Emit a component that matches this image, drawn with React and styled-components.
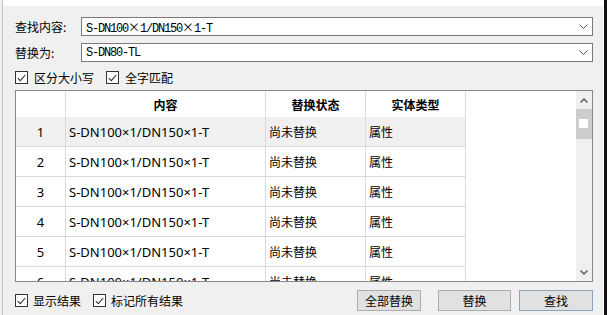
import React from "react";
import styled, { createGlobalStyle } from "styled-components";

const GlobalStyle = createGlobalStyle`
  html, body {
    margin: 0;
    padding: 0;
    background: #f0f0f0;
  }
  body {
    font-family: "Noto Sans CJK SC", "Noto Sans", sans-serif;
    color: #000;
  }
`;

const Window = styled.div`
  width: 607px;
  height: 315px;
  box-sizing: border-box;
  display: flex;
  background: #f0f0f0;
  border-right: 3px solid #111;
  overflow: hidden;
`;

const Pane = styled.div`
  flex: 1;
  margin-left: 2px;
  border-left: 1px solid #c4c4c4;
  border-right: 1px solid #fff;
  display: flex;
  flex-direction: column;
`;

const TopStrip = styled.div`
  height: 6px;
  background: #fff;
`;

const Body = styled.div`
  flex: 1;
  padding: 11px 10px 0 12px;
  display: flex;
  flex-direction: column;
`;

const FieldRow = styled.div`
  display: flex;
  align-items: center;
  height: 19px;
  & + & {
    margin-top: 7px;
  }
`;

const Label = styled.div`
  width: 66px;
  font-size: 12px;
  line-height: 19px;
  white-space: nowrap;
`;

const Combo = styled.div`
  flex: 1;
  height: 19px;
  box-sizing: border-box;
  border: 1px solid #7a7a7a;
  background: #fff;
  display: flex;
  align-items: center;
  padding: 0 4px 0 4px;
`;

const ComboText = styled.span`
  font-family: "Liberation Mono", monospace;
  font-size: 12px;
  letter-spacing: -1.2px;
  white-space: nowrap;
`;

const Wide = styled.span`
  display: inline-block;
  width: 12px;
  text-align: center;
  letter-spacing: 0;
  font-family: "Noto Sans CJK SC", sans-serif;
  font-size: 12px;
`;

const Chevron = styled.svg`
  margin-left: auto;
  display: block;
`;

const OptionsRow = styled.div`
  display: flex;
  align-items: center;
  gap: 12px;
  height: 13px;
  margin-top: ${({ top }) => top || 0}px;
`;

const CheckItem = styled.label`
  display: flex;
  align-items: center;
  gap: ${({ gap }) => gap || 6}px;
  font-size: 12px;
  white-space: nowrap;
`;

const Box = styled.span`
  width: 13px;
  height: 13px;
  box-sizing: border-box;
  border: 1px solid #333;
  background: #fff;
  display: flex;
  align-items: center;
  justify-content: center;
`;

const Table = styled.div`
  margin-top: 6px;
  height: 192px;
  box-sizing: border-box;
  border: 1px solid #828790;
  background: #fff;
  display: flex;
  overflow: hidden;
`;

const Grid = styled.div`
  flex: 1;
  display: grid;
  grid-template-columns: 50px 200px 100px 100px;
  grid-template-rows: 26px;
  grid-auto-rows: 30px;
  align-content: start;
  overflow: hidden;
`;

const HeadCell = styled.div`
  box-sizing: border-box;
  border-right: 1px solid #dadada;
  display: flex;
  align-items: center;
  justify-content: center;
  font-size: 12px;
  font-weight: 700;
`;

const Cell = styled.div`
  box-sizing: border-box;
  border-right: 1px solid #dadada;
  border-bottom: 1px solid #dadada;
  background: ${({ selected }) => (selected ? "#f0f0f0" : "#fff")};
  display: flex;
  align-items: center;
  justify-content: ${({ center }) => (center ? "center" : "flex-start")};
  padding-left: ${({ center }) => (center ? 0 : 3)}px;
  font-family: ${({ latin }) =>
    latin ? '"Noto Sans", "Noto Sans CJK SC", sans-serif' : '"Noto Sans CJK SC", sans-serif'};
  font-size: ${({ latin }) => (latin ? 13 : 12)}px;
  white-space: nowrap;
`;

const Scrollbar = styled.div`
  width: 16px;
  background: #f0f0f0;
  display: flex;
  flex-direction: column;
`;

const ArrowBtn = styled.div`
  height: ${({ h }) => h}px;
  display: flex;
  align-items: center;
  justify-content: center;
`;

const Thumb = styled.div`
  height: 30px;
  background: #cdcdcd;
  padding: 10px 0 0 3px;
  box-sizing: border-box;
`;

const ThumbMark = styled.div`
  width: 9px;
  height: 9px;
  background: #fff;
`;

const Track = styled.div`
  flex: 1;
`;

const BottomRow = styled.div`
  margin-top: 8px;
  height: 21px;
  display: flex;
  align-items: center;
`;

const Buttons = styled.div`
  margin-left: auto;
  display: flex;
`;

const Button = styled.button`
  width: ${({ w }) => w}px;
  height: 21px;
  margin-left: ${({ gap }) => gap || 0}px;
  padding: 0;
  box-sizing: border-box;
  background: #e1e1e1;
  border: 1px solid ${({ primary }) => (primary ? "#8fa3b8" : "#adadad")};
  font-family: "Noto Sans CJK SC", sans-serif;
  font-size: 12px;
  color: #000;
  line-height: 19px;
`;

const Check = () => (
  <Box>
    <svg width="9" height="8" viewBox="0 0 9 8">
      <path d="M0.8 4.2 L3.3 6.6 L8.2 1" fill="none" stroke="#333" strokeWidth="1.1" />
    </svg>
  </Box>
);

const DownChevron = () => (
  <Chevron width="9" height="5" viewBox="0 0 9 5">
    <path d="M0.5 0.5 L4.5 4.5 L8.5 0.5" fill="none" stroke="#555" strokeWidth="1" />
  </Chevron>
);

const SmallArrow = ({ up }) => (
  <svg width="8" height="5" viewBox="0 0 8 5">
    <path
      d={up ? "M0.5 4.5 L4 1 L7.5 4.5" : "M0.5 0.5 L4 4 L7.5 0.5"}
      fill="none"
      stroke="#606060"
      strokeWidth="1.5"
    />
  </svg>
);

const rows = [1, 2, 3, 4, 5, 6];

const App = () => (
  <>
    <GlobalStyle />
    <Window>
      <Pane>
        <TopStrip />
        <Body>
          <FieldRow>
            <Label>查找内容:</Label>
            <Combo>
              <ComboText>
                S-DN100<Wide>×</Wide>1/DN150<Wide>×</Wide>1-T
              </ComboText>
              <DownChevron />
            </Combo>
          </FieldRow>
          <FieldRow>
            <Label>替换为:</Label>
            <Combo>
              <ComboText>S-DN80-TL</ComboText>
              <DownChevron />
            </Combo>
          </FieldRow>
          <OptionsRow top={9}>
            <CheckItem>
              <Check />
              区分大小写
            </CheckItem>
            <CheckItem>
              <Check />
              全字匹配
            </CheckItem>
          </OptionsRow>
          <Table>
            <Grid>
              <HeadCell />
              <HeadCell>内容</HeadCell>
              <HeadCell>替换状态</HeadCell>
              <HeadCell>实体类型</HeadCell>
              {rows.map((n) => (
                <React.Fragment key={n}>
                  <Cell center latin selected={n === 1}>
                    {n}
                  </Cell>
                  <Cell latin selected={n === 1}>
                    S-DN100×1/DN150×1-T
                  </Cell>
                  <Cell selected={n === 1}>尚未替换</Cell>
                  <Cell selected={n === 1}>属性</Cell>
                </React.Fragment>
              ))}
            </Grid>
            <Scrollbar>
              <ArrowBtn h={18}>
                <SmallArrow up />
              </ArrowBtn>
              <Thumb>
                <ThumbMark />
              </Thumb>
              <Track />
              <ArrowBtn h={17}>
                <SmallArrow />
              </ArrowBtn>
            </Scrollbar>
          </Table>
          <BottomRow>
            <OptionsRow>
              <CheckItem gap={5}>
                <Check />
                显示结果
              </CheckItem>
              <CheckItem gap={5}>
                <Check />
                标记所有结果
              </CheckItem>
            </OptionsRow>
            <Buttons>
              <Button w={64}>全部替换</Button>
              <Button w={73} gap={17}>
                替换
              </Button>
              <Button w={74} gap={8} primary>
                查找
              </Button>
            </Buttons>
          </BottomRow>
        </Body>
      </Pane>
    </Window>
  </>
);

export default App;
